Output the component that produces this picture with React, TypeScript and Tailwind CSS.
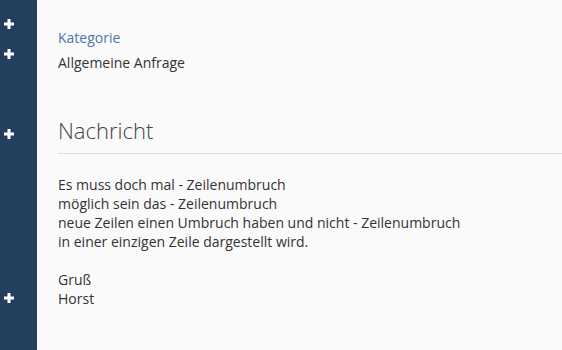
function Plus() {
  return (
    <svg width="10" height="10" viewBox="0 0 10 10" className="block">
      <rect x="3.5" y="0" width="3" height="10" fill="#fff" />
      <rect x="0" y="3.5" width="10" height="3" fill="#fff" />
    </svg>
  )
}

export default function App() {
  return (
    <div
      className="flex h-[350px] w-[562px] overflow-hidden bg-[#fafafa] text-[14px] leading-[19px] text-[#333]"
      style={{ fontFamily: '"Open Sans", "Liberation Sans", sans-serif' }}
    >
      <aside className="flex w-[37px] shrink-0 flex-col bg-[#243f5e] pl-[4px]">
        <div className="mt-[19px]"><Plus /></div>
        <div className="mt-[20px]"><Plus /></div>
        <div className="mt-[70px]"><Plus /></div>
        <div className="mt-[154px]"><Plus /></div>
      </aside>
      <main className="flex-1 pl-[21px] pt-[28px]">
        <div className="text-[#4f74a8]">Kategorie</div>
        <div className="mt-[6px]">Allgemeine Anfrage</div>

        <h2 className="mt-[43px] border-b border-[#dddddd] pb-[8px] text-[22px] font-light leading-[30px] text-[#444]">
          Nachricht
        </h2>

        <div className="mt-[21px]">
          <p>Es muss doch mal - Zeilenumbruch</p>
          <p>möglich sein das - Zeilenumbruch</p>
          <p>neue Zeilen einen Umbruch haben und nicht - Zeilenumbruch</p>
          <p>in einer einzigen Zeile dargestellt wird.</p>
          <p className="mt-[19px]">Gruß</p>
          <p>Horst</p>
        </div>
      </main>
    </div>
  )
}
